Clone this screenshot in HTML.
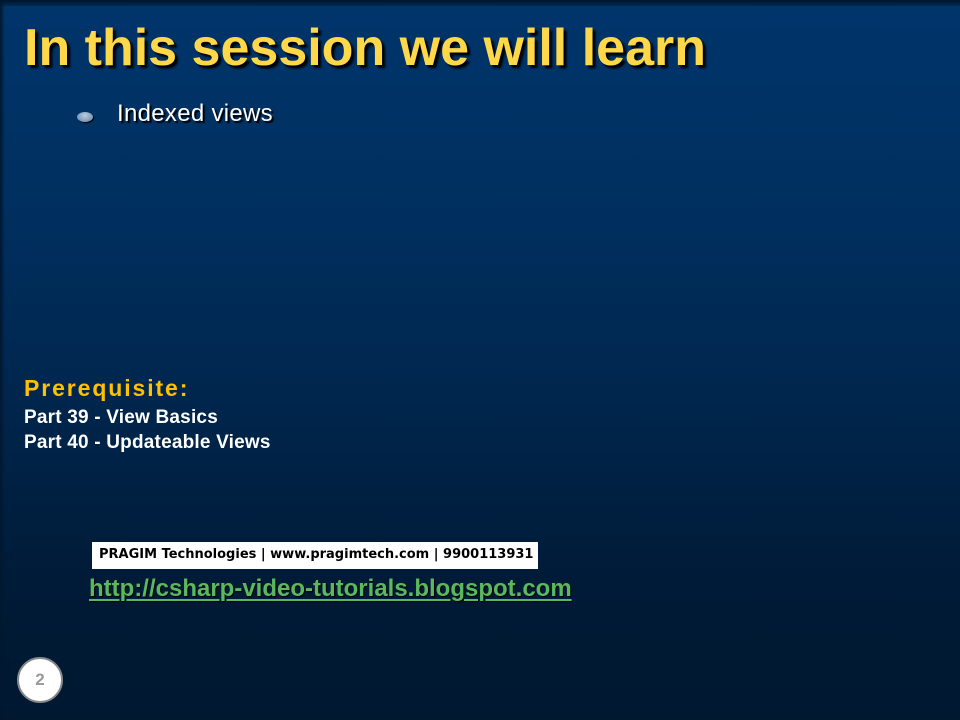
<!DOCTYPE html>
<html><head><style>
html,body{margin:0;padding:0}
body{width:960px;height:720px;position:relative;overflow:hidden;background:linear-gradient(180deg,#00356b 0%,#002f5f 30%,#00264d 55%,#001b38 80%,#001830 100%);font-family:"Liberation Sans",sans-serif}
.topbar{position:absolute;left:0;top:0;width:960px;height:6px;background:linear-gradient(#00152b,#002a55)}
.lside{position:absolute;left:0;top:0;width:5px;height:720px;background:linear-gradient(90deg,#00172f,transparent)}
.t{position:absolute;left:24px;top:18px;font-size:52px;font-weight:bold;color:#ffd84a;text-shadow:3px 3px 2px #000;white-space:nowrap;letter-spacing:0px}
.b{position:absolute;left:77px;top:112px;width:16px;height:10px;border-radius:50%;background:radial-gradient(ellipse at 50% 35%,#b8cde0,#5d7fa3);box-shadow:1px 1px 1px #000}
.i{position:absolute;left:117px;top:100px;font-size:24px;color:#fff;text-shadow:2px 2px 1px #000;white-space:nowrap;letter-spacing:0.3px}
.p{position:absolute;left:24px;top:375px;font-size:23px;font-weight:bold;color:#ffc000;letter-spacing:1.9px}
.l{position:absolute;left:24px;font-size:19px;font-weight:bold;color:#fff;letter-spacing:0.2px}
.box{position:absolute;left:92px;top:542px;width:446px;height:27px;background:#fff}
.box span{position:absolute;left:7px;top:5px;font-family:"DejaVu Sans",sans-serif;font-weight:bold;font-size:13px;color:#000;white-space:nowrap}
.u{position:absolute;left:89px;top:575px;font-size:24px;font-weight:bold;color:#5cb85c;text-decoration:underline;text-decoration-thickness:2px;text-underline-offset:3px;letter-spacing:0px;text-shadow:1px 1px 1px #000;white-space:nowrap}
.n{position:absolute;left:17px;top:657px;width:42px;height:42px;border-radius:50%;background:#fff;border:2px solid #888;text-align:center;line-height:42px;font-size:17px;font-weight:bold;color:#999}
</style></head><body>
<div class="topbar"></div><div class="lside"></div>
<div class="t">In this session we will learn</div>
<div class="b"></div>
<div class="i">Indexed views</div>
<div class="p">Prerequisite:</div>
<div class="l" style="top:407px">Part 39 - View Basics</div>
<div class="l" style="top:432px">Part 40 - Updateable Views</div>
<div class="box"><span>PRAGIM Technologies | www.pragimtech.com | 9900113931</span></div>
<div class="u">http://csharp-video-tutorials.blogspot.com</div>
<div class="n">2</div>
</body></html>
